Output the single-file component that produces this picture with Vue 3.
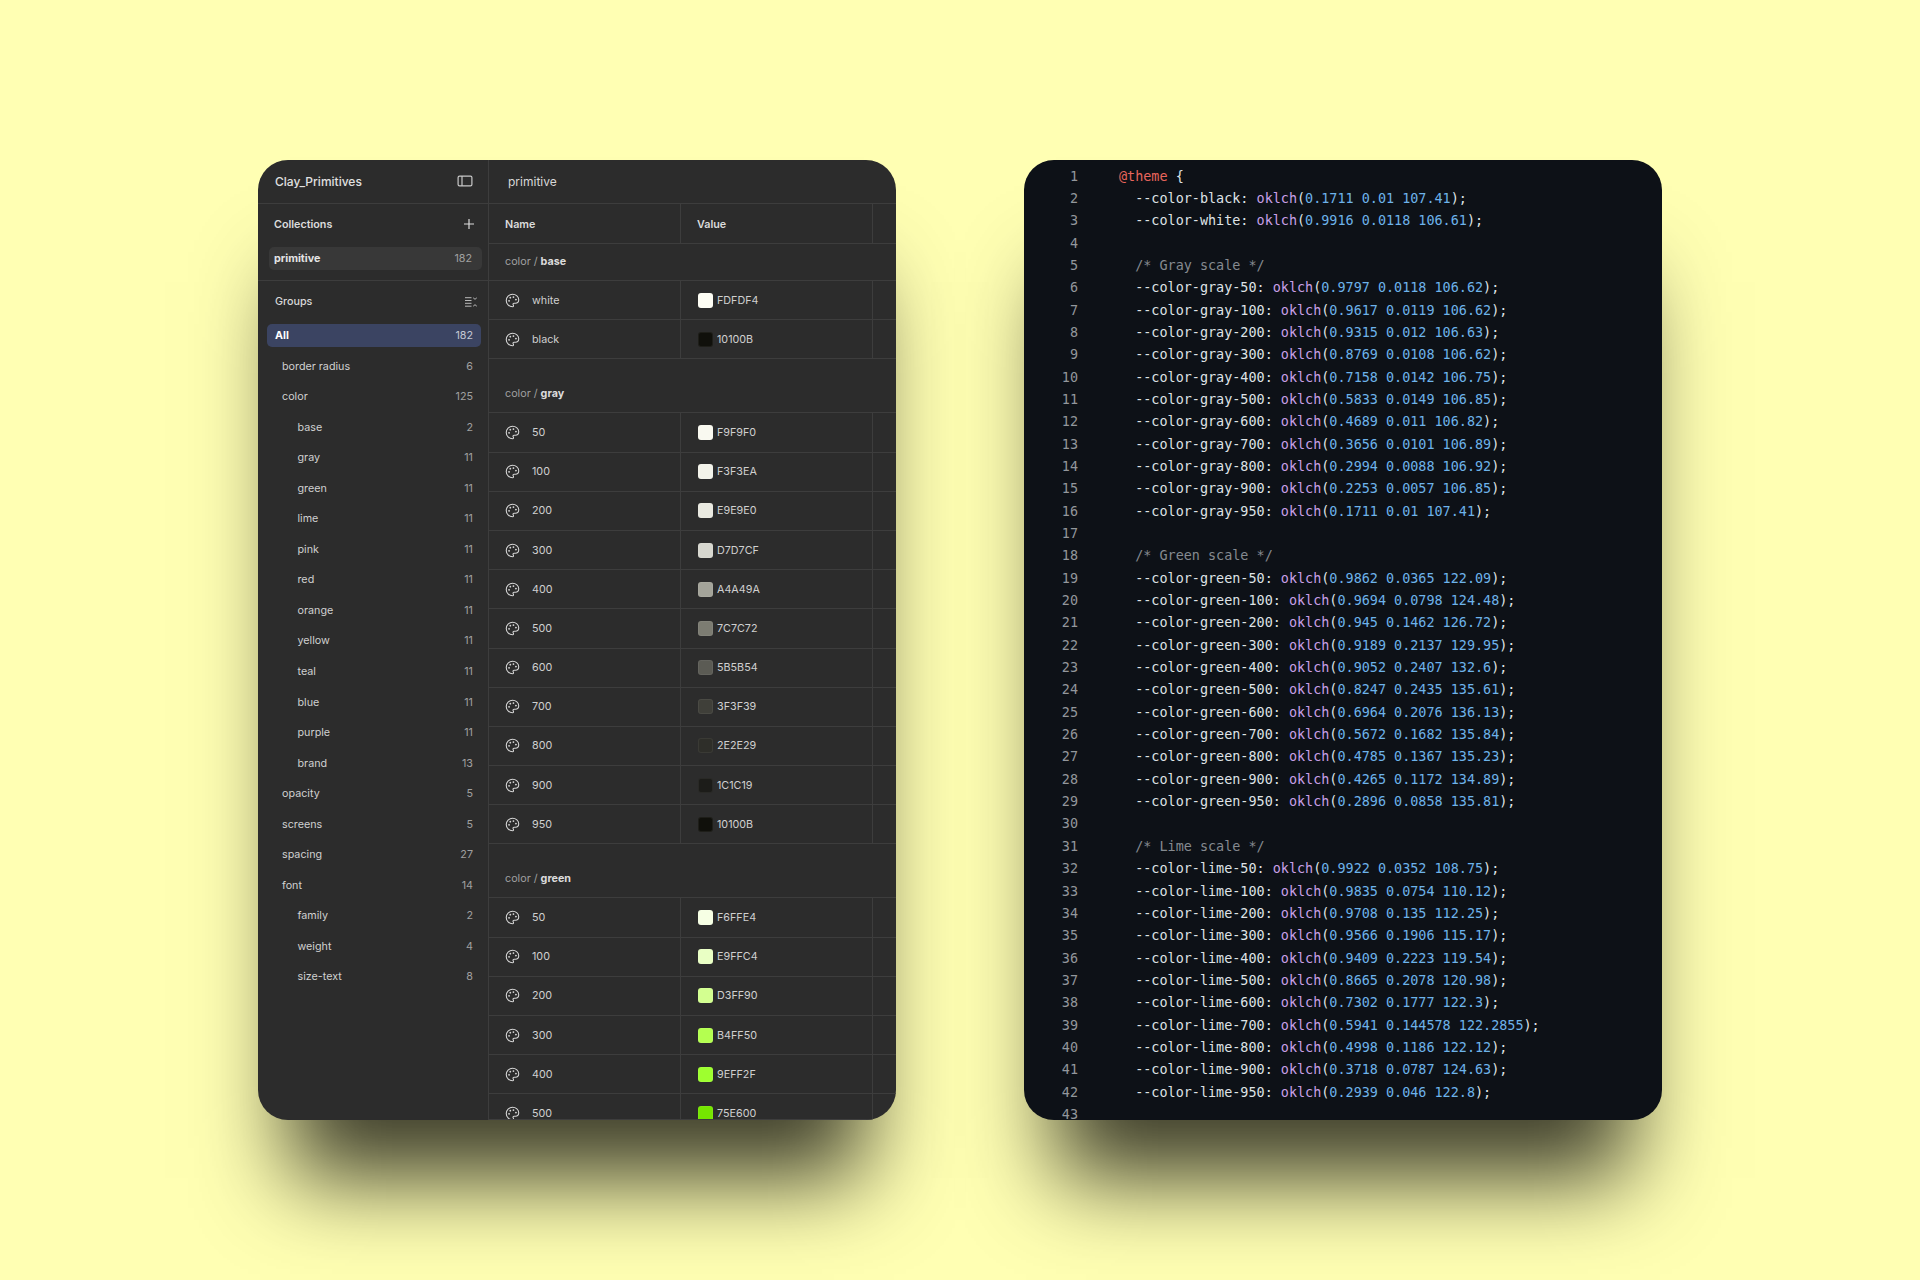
<template>
  <main class="page">
    <section class="panel vars">
      <aside class="sidebar">
        <header class="side-head">
          <span class="title">Clay_Primitives</span>
          <svg class="panel-icon" width="16" height="12" viewBox="0 0 16 12" fill="none" stroke="currentColor" stroke-width="1.2">
            <rect x="1.1" y="1.1" width="13.8" height="9.8" rx="1.4" />
            <path d="M5 1.1v9.8" />
          </svg>
        </header>

        <div class="coll-head">
          <span>Collections</span>
          <svg width="12" height="12" viewBox="0 0 12 12" stroke="currentColor" stroke-width="1.2">
            <path d="M6 1v10M1 6h10" />
          </svg>
        </div>
        <div class="coll-item">
          <span>primitive</span>
          <span class="count">182</span>
        </div>

        <div class="groups-head">
          <span>Groups</span>
          <svg width="14" height="10" viewBox="0 0 14 10" fill="none" stroke="currentColor" stroke-width="0.9">
            <path d="M1 .7h6.5M1 3.5h6.5M1 6.3h6.5M1 9.2h6.5" />
            <path d="M9.2 .8l1.8 1.5 1.8-1.5M9.2 9.2l1.8-1.5 1.8 1.5" />
          </svg>
        </div>
        <ul class="groups">
          <li
            v-for="g in groups"
            :key="g.name + g.level"
            :class="['group', 'lv' + g.level, { active: g.level === 0 }]"
          >
            <span>{{ g.name }}</span>
            <span class="count">{{ g.count }}</span>
          </li>
        </ul>
      </aside>

      <div class="main">
        <header class="main-head">primitive</header>
        <div class="thead">
          <div class="cell">Name</div>
          <div class="cell">Value</div>
          <div class="cell"></div>
        </div>

        <template v-for="(sec, s) in sections" :key="sec.name">
          <div :class="['sec-head', { spaced: s > 0 }]">color / <b>{{ sec.name }}</b></div>
          <div v-for="t in sec.tokens" :key="t[0]" class="row">
            <div class="cell name">
              <svg class="palette" width="15" height="15" viewBox="0 0 24 24" fill="none" stroke="currentColor" stroke-width="1.7" stroke-linecap="round" stroke-linejoin="round">
                <circle cx="13.5" cy="6.5" r=".6" fill="currentColor" />
                <circle cx="17.5" cy="10.5" r=".6" fill="currentColor" />
                <circle cx="8.5" cy="7.5" r=".6" fill="currentColor" />
                <circle cx="6.5" cy="12.5" r=".6" fill="currentColor" />
                <path d="M12 2C6.5 2 2 6.5 2 12s4.5 10 10 10c.926 0 1.648-.746 1.648-1.688 0-.437-.18-.835-.437-1.125-.29-.289-.438-.652-.438-1.125a1.64 1.64 0 0 1 1.668-1.668h1.996c3.051 0 5.555-2.503 5.555-5.554C21.965 6.012 17.461 2 12 2z" />
              </svg>
              <span>{{ t[0] }}</span>
            </div>
            <div class="cell value">
              <i class="swatch" :style="{ background: '#' + t[1] }"></i>
              <span>{{ t[1] }}</span>
            </div>
            <div class="cell"></div>
          </div>
        </template>
      </div>
    </section>

    <section class="panel code">
      <div v-for="(line, i) in lines" :key="i" class="line">
        <span class="ln">{{ i + 1 }}</span>
        <span v-if="line.at" class="lc"><span class="at">@theme</span> {</span>
        <span v-else-if="line.comment" class="lc in"><span class="cm">{{ line.comment }}</span></span>
        <span v-else-if="line.prop" class="lc in">{{ line.prop }}: <span class="fn">oklch</span>(<span class="num">{{ line.val }}</span>);</span>
      </div>
    </section>
  </main>
</template>

<script setup>
const groups = [
  { name: "All", count: 182, level: 0 },
  { name: "border radius", count: 6, level: 1 },
  { name: "color", count: 125, level: 1 },
  { name: "base", count: 2, level: 2 },
  { name: "gray", count: 11, level: 2 },
  { name: "green", count: 11, level: 2 },
  { name: "lime", count: 11, level: 2 },
  { name: "pink", count: 11, level: 2 },
  { name: "red", count: 11, level: 2 },
  { name: "orange", count: 11, level: 2 },
  { name: "yellow", count: 11, level: 2 },
  { name: "teal", count: 11, level: 2 },
  { name: "blue", count: 11, level: 2 },
  { name: "purple", count: 11, level: 2 },
  { name: "brand", count: 13, level: 2 },
  { name: "opacity", count: 5, level: 1 },
  { name: "screens", count: 5, level: 1 },
  { name: "spacing", count: 27, level: 1 },
  { name: "font", count: 14, level: 1 },
  { name: "family", count: 2, level: 2 },
  { name: "weight", count: 4, level: 2 },
  { name: "size-text", count: 8, level: 2 },
];

const sections = [
  { name: "base", tokens: [["white", "FDFDF4"], ["black", "10100B"]] },
  {
    name: "gray",
    tokens: [
      ["50", "F9F9F0"], ["100", "F3F3EA"], ["200", "E9E9E0"], ["300", "D7D7CF"],
      ["400", "A4A49A"], ["500", "7C7C72"], ["600", "5B5B54"], ["700", "3F3F39"],
      ["800", "2E2E29"], ["900", "1C1C19"], ["950", "10100B"],
    ],
  },
  {
    name: "green",
    tokens: [
      ["50", "F6FFE4"], ["100", "E9FFC4"], ["200", "D3FF90"],
      ["300", "B4FF50"], ["400", "9EFF2F"], ["500", "75E600"],
    ],
  },
];

const steps = ["50", "100", "200", "300", "400", "500", "600", "700", "800", "900", "950"];

const scale = (name, values) =>
  values.map((val, i) => ({ prop: `--color-${name}-${steps[i]}`, val }));

const lines = [
  { at: true },
  { prop: "--color-black", val: "0.1711 0.01 107.41" },
  { prop: "--color-white", val: "0.9916 0.0118 106.61" },
  {},
  { comment: "/* Gray scale */" },
  ...scale("gray", [
    "0.9797 0.0118 106.62", "0.9617 0.0119 106.62", "0.9315 0.012 106.63", "0.8769 0.0108 106.62",
    "0.7158 0.0142 106.75", "0.5833 0.0149 106.85", "0.4689 0.011 106.82", "0.3656 0.0101 106.89",
    "0.2994 0.0088 106.92", "0.2253 0.0057 106.85", "0.1711 0.01 107.41",
  ]),
  {},
  { comment: "/* Green scale */" },
  ...scale("green", [
    "0.9862 0.0365 122.09", "0.9694 0.0798 124.48", "0.945 0.1462 126.72", "0.9189 0.2137 129.95",
    "0.9052 0.2407 132.6", "0.8247 0.2435 135.61", "0.6964 0.2076 136.13", "0.5672 0.1682 135.84",
    "0.4785 0.1367 135.23", "0.4265 0.1172 134.89", "0.2896 0.0858 135.81",
  ]),
  {},
  { comment: "/* Lime scale */" },
  ...scale("lime", [
    "0.9922 0.0352 108.75", "0.9835 0.0754 110.12", "0.9708 0.135 112.25", "0.9566 0.1906 115.17",
    "0.9409 0.2223 119.54", "0.8665 0.2078 120.98", "0.7302 0.1777 122.3", "0.5941 0.144578 122.2855",
    "0.4998 0.1186 122.12", "0.3718 0.0787 124.63", "0.2939 0.046 122.8",
  ]),
  {},
];
</script>

<style>
body {
  background: #ffffb3;
}
</style>

<style scoped>
.page {
  height: 1280px;
  box-sizing: border-box;
  padding-top: 160px;
  display: flex;
  justify-content: center;
  gap: 128px;
  background: #ffffb3;
  overflow: hidden;
}

.panel {
  width: 638px;
  height: 960px;
  border-radius: 30px;
  overflow: hidden;
  flex-shrink: 0;
  box-shadow: 0 90px 84px -32px rgba(0, 0, 0, 0.76);
}

.vars {
  display: flex;
  background: #2c2c2c;
  color: #d0d0d0;
  font-family: Inter, "Liberation Sans", sans-serif;
  font-size: 10.75px;
}

.sidebar {
  width: 230px;
  flex-shrink: 0;
  border-right: 1px solid #3d3d3d;
}

.side-head {
  height: 44px;
  box-sizing: border-box;
  padding: 0 14.6px 1px 17px;
  display: flex;
  align-items: center;
  justify-content: space-between;
  border-bottom: 1px solid #3d3d3d;
}

.title {
  font-size: 12px;
  font-weight: 500;
  color: #e0e0e0;
}

.panel-icon {
  color: #c8c8c8;
}

.coll-head {
  height: 39px;
  box-sizing: border-box;
  padding: 1px 13px 0 16px;
  display: flex;
  align-items: center;
  justify-content: space-between;
  font-weight: 600;
  color: #dcdcdc;
}

.coll-item {
  height: 23px;
  margin: 4px 6px 0 11px;
  padding: 0 10px 0 5px;
  display: flex;
  align-items: center;
  justify-content: space-between;
  border-radius: 5px;
  background: #383838;
  font-weight: 700;
  color: #e4e4e4;
}

.coll-item .count {
  font-weight: 400;
}

.count {
  color: #a0a0a0;
}

.groups-head {
  height: 44px;
  margin-top: 10px;
  box-sizing: border-box;
  padding: 0 10px 2px 17px;
  display: flex;
  align-items: center;
  justify-content: space-between;
  border-top: 1px solid #3d3d3d;
  font-weight: 500;
  color: #d8d8d8;
}

.groups-head svg {
  color: #c8c8c8;
}

.groups {
  list-style: none;
  margin: 0;
  padding: 0 7px 0 9px;
  display: flex;
  flex-direction: column;
  gap: 7.55px;
}

.group {
  height: 23px;
  padding-right: 8px;
  display: flex;
  align-items: center;
  justify-content: space-between;
  border-radius: 5px;
}

.lv0 {
  padding-left: 8px;
}

.lv1 {
  padding-left: 15px;
}

.lv2 {
  padding-left: 30.5px;
}

.active {
  background: #3b4462;
  color: #fff;
  font-weight: 700;
}

.active .count {
  font-weight: 400;
  color: #c4c8d4;
}

.main {
  flex: 1;
  min-width: 0;
  border-bottom: 1px solid #3d3d3d;
  overflow: hidden;
}

.main-head {
  height: 44px;
  box-sizing: border-box;
  padding: 0 0 1px 19px;
  display: flex;
  align-items: center;
  border-bottom: 1px solid #3d3d3d;
  font-size: 12px;
  color: #d8d8d8;
}

.thead,
.row {
  display: grid;
  grid-template-columns: 192px 192px 1fr;
  box-sizing: border-box;
  border-bottom: 1px solid #3d3d3d;
}

.thead {
  height: 40px;
  font-weight: 600;
  color: #dcdcdc;
}

.thead .cell {
  padding-top: 1px;
}

.row {
  height: 39.2px;
}

.cell {
  display: flex;
  align-items: center;
  padding-left: 16px;
  border-right: 1px solid #3d3d3d;
}

.cell:last-child {
  border-right: 0;
}

.sec-head {
  height: 37px;
  box-sizing: border-box;
  padding: 0 0 2px 16px;
  display: flex;
  align-items: center;
  white-space: pre;
  border-bottom: 1px solid #3d3d3d;
  color: #a0a0a0;
}

.sec-head.spaced {
  height: 54px;
  padding-top: 18px;
}

.sec-head b {
  font-weight: 700;
  color: #dcdcdc;
}

.name {
  gap: 12px;
}

.palette {
  color: #d8d8d8;
  flex-shrink: 0;
}

.value {
  gap: 4px;
  padding-left: 17px;
}

.swatch {
  width: 15px;
  height: 15px;
  box-sizing: border-box;
  border-radius: 3px;
  border: 1px solid rgba(255, 255, 255, 0.06);
}

.code {
  box-sizing: border-box;
  padding-top: 5.5px;
  background: #0d1117;
  color: #dfe3e6;
  font-family: "DejaVu Sans Mono", monospace;
  font-size: 13.45px;
  line-height: 22.35px;
}

.line {
  display: flex;
  height: 22.35px;
  white-space: pre;
}

.ln {
  width: 54px;
  text-align: right;
  color: #93979c;
}

.lc {
  margin-left: 41px;
}

.lc.in {
  margin-left: 57.2px;
}

.at {
  color: #e8655c;
}

.cm {
  color: #858a90;
}

.fn {
  color: #c9a0e8;
}

.num {
  color: #6db3ea;
}
</style>
